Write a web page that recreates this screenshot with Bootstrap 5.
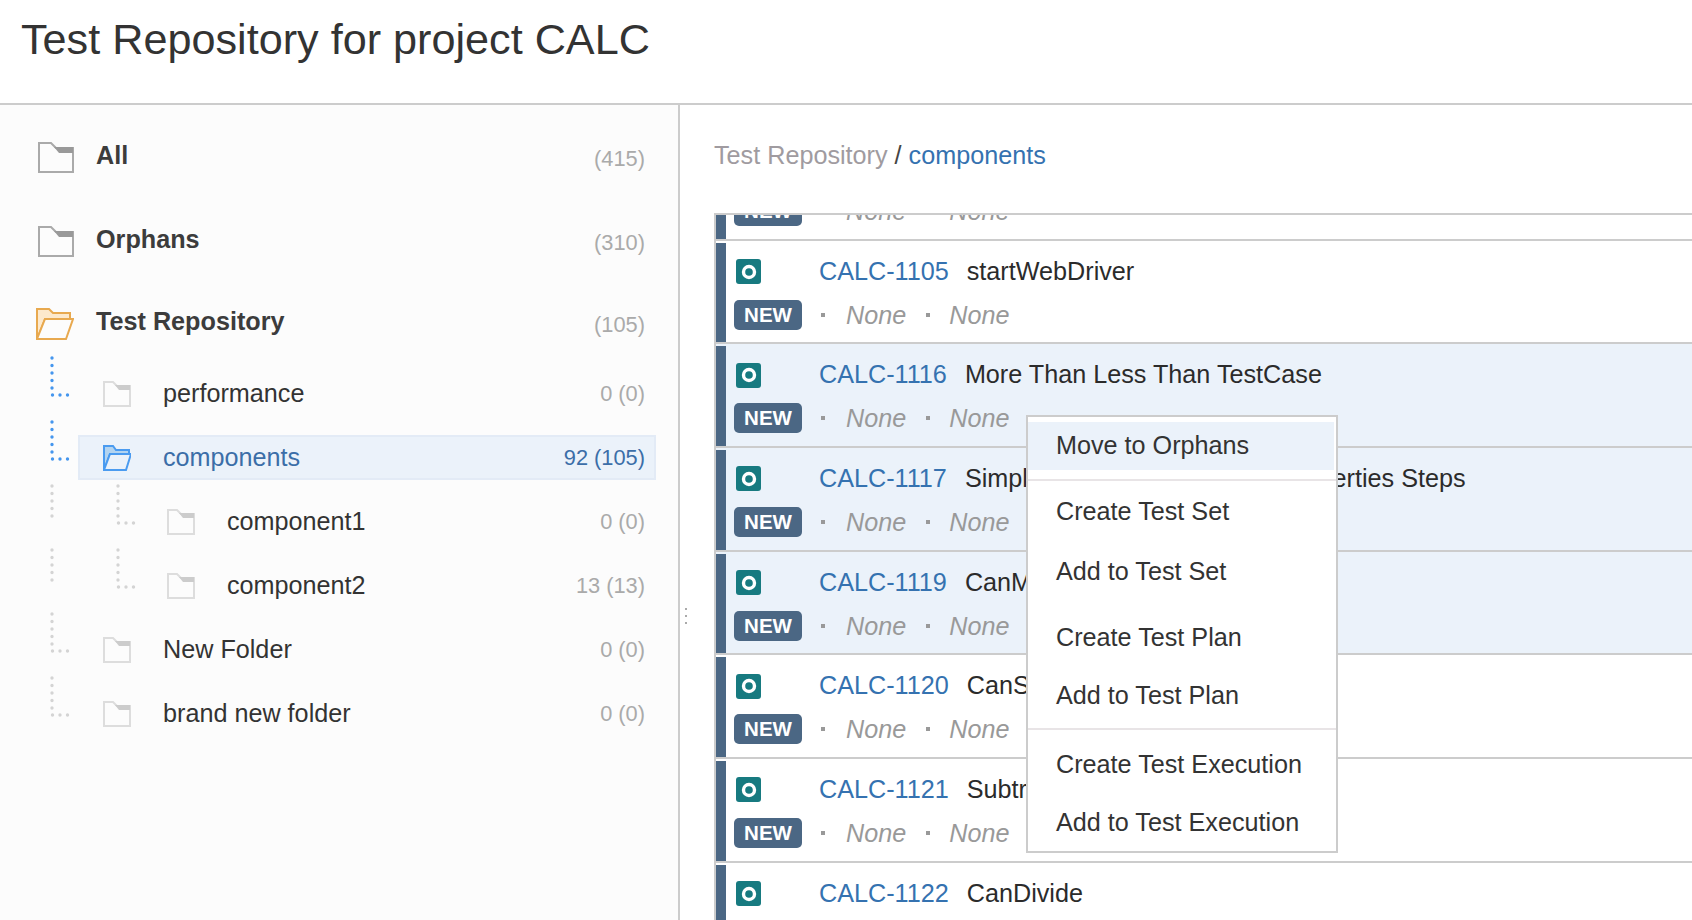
<!DOCTYPE html>
<html lang="en"><head><meta charset="utf-8"><title>Test Repository</title>
<link href="https://cdn.jsdelivr.net/npm/bootstrap@5.3.0/dist/css/bootstrap.min.css" rel="stylesheet">
<style>
html,body{height:920px;overflow:hidden}
body{font-family:"Liberation Sans",Arial,sans-serif;font-size:25.2px;color:#333;background:#fff}
.page-head{height:105px;border-bottom:2px solid #ccc;padding:13px 0 0 21px}
.page-head h1{font-size:43.2px;font-weight:400;line-height:52px;margin:0;color:#333}
.work{height:815px}
.side{width:680px;flex:none;background:#fcfcfc;border-right:2px solid #ccc;padding:29px 22px 0 38px;position:relative}
.tree-top{height:45px;padding-right:11px}
.tree-top svg{margin-top:2px}
.tree-top b{color:#3c3c3c;margin-left:22px;margin-top:-2px}
.tree-top .fold-open{margin-left:-2px}
.tree-top .fold-open+b{margin-left:22px}
.tree-row{height:45px;margin:0 0 19px 40px;padding-right:9px;border:2px solid transparent}
.tree-row.on{background:#ebf2fa;border-color:#e3ebf6;color:#3b6ea8}
.tree-top.gap-orph{margin-top:39px}.tree-top.gap-repo{margin-top:37px}.tree-row.gap-tree{margin-top:26px}
.guide{flex:none;width:1px;height:41px;overflow:visible;fill:none;stroke-width:3.4px;stroke-linecap:round;stroke-dasharray:0 7.5;stroke:#d4d4d4}
.guide.lit{stroke:#4596ee}
.lvl1{margin-left:22px}.lvl2{margin-left:86px}
.tree-row .nm{margin-left:32px}
.cnt{margin-left:auto;font-size:21.8px;color:#aaa;margin-top:2px}
.on .cnt{color:#3b6ea8}
.tree-top .top-cnt{margin-top:6px}
.grip{position:absolute;right:-9px;top:503px;width:2px;height:20px;background:repeating-linear-gradient(#aaa 0 2px,transparent 2px 7px)}
.main{flex:1;min-width:0;padding:0 0 0 34px;position:relative}
.crumbs{margin:0;height:108px;padding-top:32px;--bs-breadcrumb-margin-bottom:0;--bs-breadcrumb-item-padding-x:7px;--bs-breadcrumb-divider-color:#444}
.crumbs .breadcrumb-item:first-child{color:#a09ba0}
.crumbs a,.cid{color:#3572b0;text-decoration:none}
.crumbs .breadcrumb-item.active{color:#3572b0}
.tests{height:707px;overflow:hidden;border-top:2px solid #ccc;border-left:2px solid #ccc;border-radius:0;--bs-list-group-border-width:0}
.tests .list-group-item{height:103.67px;flex:none;padding:0;border-bottom:2px solid #ccc;border-radius:0;display:flex;color:#2b2b2b}
.tests .sel{background:#ebf2fa}
.tests .first{margin-top:-78px}
.bar{width:10px;flex:none;margin-top:2px;background:#4b6784}
.tbody{padding:16px 0 0 8px;flex:1;min-width:0}
.ln1,.ln2{white-space:nowrap}
.ln1{height:28px;line-height:28px;margin-left:3px}
.ln2{margin-top:15px;height:30px}
.tico{width:25px;height:25px;flex:none;border-radius:3px;background:#177a80;margin:2px 58px 0 -1px}
.cid{margin-right:18px}
.pill-new{background:#4b6784;color:#fff;font-weight:700;font-size:20.5px;width:68px;height:30px;border-radius:5px;padding:0;line-height:30px}
.dotm{width:4px;height:4px;background:#999;flex:none;margin:0 21px 0 19px}
.dotm.b{margin:0 19px 0 20px}
.none{font-style:italic;color:#999;line-height:30px}
.ctx{display:block;position:absolute;left:346px;top:310px;width:312px;height:438px;padding:5px 0 0;border:2px solid #ccc;border-radius:0;background:#fff;--bs-dropdown-color:#333}
.ctx .dropdown-item{padding:0 28px;height:48px;line-height:46px;color:#333;font-size:25.2px}
.ctx .dropdown-item.hot{background:#ebf2fa;width:306px;margin:0 0 9px 0}
.ctx .dropdown-divider{margin:0;border-top:2px solid #e8e4e6;opacity:1}
.ctx .i2{margin-top:7px}.ctx .i3{margin-top:12px}.ctx .i4{margin-top:18px}.ctx .i5{margin-top:10px}.ctx .i6{margin-top:11px}.ctx .i7{margin-top:10px}
.ctx .dv2{margin-top:8px}
</style></head>
<body>
<header class="page-head"><h1>Test Repository for project CALC</h1></header>
<div class="work d-flex">
<aside class="side">
 <div class="tree-top d-flex align-items-center"><svg width="36" height="31" viewBox="0 0 36 31"><path d="M1 1H13L18 6H35V30H1Z" fill="#fcfcfc" stroke="#aaa" stroke-width="2"/><path d="M16 5H35V11H21Z" fill="#999"/></svg><b>All</b><span class="cnt top-cnt">(415)</span></div>
 <div class="tree-top gap-orph d-flex align-items-center"><svg width="36" height="31" viewBox="0 0 36 31"><path d="M1 1H13L18 6H35V30H1Z" fill="#fcfcfc" stroke="#aaa" stroke-width="2"/><path d="M16 5H35V11H21Z" fill="#999"/></svg><b>Orphans</b><span class="cnt top-cnt">(310)</span></div>
 <div class="tree-top gap-repo d-flex align-items-center"><svg class="fold-open" width="38" height="32" viewBox="0 0 38 32"><path d="M1 31V1H13L17 5H34V11H9L1 31Z" fill="#fde9cc" stroke="#e8a94f" stroke-width="2"/><path d="M1 31L9 11H37L30 31Z" fill="#fcfcfc" stroke="#e8a94f" stroke-width="2"/></svg><b>Test Repository</b><span class="cnt top-cnt">(105)</span></div>
 <div class="tree-row gap-tree d-flex align-items-center"><svg class="guide lit" viewBox="0 0 1 41"><path d="M-28 -15V22H-12"/></svg><svg class="lvl1" width="28" height="26" viewBox="0 0 28 26"><path d="M1 1H10L14 5H27V25H1Z" fill="#fcfcfc" stroke="#ddd" stroke-width="2"/><path d="M12 4H27V9H16Z" fill="#ccc"/></svg><span class="nm">performance</span><span class="cnt">0 (0)</span></div>
 <div class="tree-row on d-flex align-items-center"><svg class="guide lit" viewBox="0 0 1 41"><path d="M-28 -15V22H-12"/></svg><svg class="lvl1" width="28" height="26" viewBox="0 0 28 26"><path d="M1 25V1H10L13 5H26V9H7L1 25Z" fill="#b3d4f0" stroke="#4a9bf0" stroke-width="2"/><path d="M1 25L7 9H28L23 25Z" fill="#ebf2fa" stroke="#4a9bf0" stroke-width="2"/></svg><span class="nm">components</span><span class="cnt">92 (105)</span></div>
 <div class="tree-row d-flex align-items-center"><svg class="guide" viewBox="0 0 1 41"><path d="M-28 -15V22M38 -15V22H54"/></svg><svg class="lvl2" width="28" height="26" viewBox="0 0 28 26"><path d="M1 1H10L14 5H27V25H1Z" fill="#fcfcfc" stroke="#ddd" stroke-width="2"/><path d="M12 4H27V9H16Z" fill="#ccc"/></svg><span class="nm">component1</span><span class="cnt">0 (0)</span></div>
 <div class="tree-row d-flex align-items-center"><svg class="guide" viewBox="0 0 1 41"><path d="M-28 -15V22M38 -15V22H54"/></svg><svg class="lvl2" width="28" height="26" viewBox="0 0 28 26"><path d="M1 1H10L14 5H27V25H1Z" fill="#fcfcfc" stroke="#ddd" stroke-width="2"/><path d="M12 4H27V9H16Z" fill="#ccc"/></svg><span class="nm">component2</span><span class="cnt">13 (13)</span></div>
 <div class="tree-row d-flex align-items-center"><svg class="guide" viewBox="0 0 1 41"><path d="M-28 -15V22H-12"/></svg><svg class="lvl1" width="28" height="26" viewBox="0 0 28 26"><path d="M1 1H10L14 5H27V25H1Z" fill="#fcfcfc" stroke="#ddd" stroke-width="2"/><path d="M12 4H27V9H16Z" fill="#ccc"/></svg><span class="nm">New Folder</span><span class="cnt">0 (0)</span></div>
 <div class="tree-row d-flex align-items-center"><svg class="guide" viewBox="0 0 1 41"><path d="M-28 -15V22H-12"/></svg><svg class="lvl1" width="28" height="26" viewBox="0 0 28 26"><path d="M1 1H10L14 5H27V25H1Z" fill="#fcfcfc" stroke="#ddd" stroke-width="2"/><path d="M12 4H27V9H16Z" fill="#ccc"/></svg><span class="nm">brand new folder</span><span class="cnt">0 (0)</span></div>
 <div class="grip"></div>
</aside>
<main class="main">
 <nav><ol class="breadcrumb crumbs"><li class="breadcrumb-item">Test Repository</li><li class="breadcrumb-item active"><a href="#">components</a></li></ol></nav>
 <div class="list-group tests">
  <div class="list-group-item first"><div class="bar"></div><div class="tbody"><div class="ln1 d-flex align-items-center"><span class="tico d-flex align-items-center justify-content-center"><svg width="16" height="16" viewBox="0 0 16 16"><circle cx="8" cy="8" r="5.5" fill="none" stroke="#fff" stroke-width="3.4"/></svg></span><a class="cid" href="#">CALC-1104</a><span>CanAdd</span></div><div class="ln2 d-flex align-items-center"><span class="badge pill-new">NEW</span><span class="dotm"></span><span class="none">None</span><span class="dotm b"></span><span class="none">None</span></div></div></div>
  <div class="list-group-item"><div class="bar"></div><div class="tbody"><div class="ln1 d-flex align-items-center"><span class="tico d-flex align-items-center justify-content-center"><svg width="16" height="16" viewBox="0 0 16 16"><circle cx="8" cy="8" r="5.5" fill="none" stroke="#fff" stroke-width="3.4"/></svg></span><a class="cid" href="#">CALC-1105</a><span>startWebDriver</span></div><div class="ln2 d-flex align-items-center"><span class="badge pill-new">NEW</span><span class="dotm"></span><span class="none">None</span><span class="dotm b"></span><span class="none">None</span></div></div></div>
  <div class="list-group-item sel"><div class="bar"></div><div class="tbody"><div class="ln1 d-flex align-items-center"><span class="tico d-flex align-items-center justify-content-center"><svg width="16" height="16" viewBox="0 0 16 16"><circle cx="8" cy="8" r="5.5" fill="none" stroke="#fff" stroke-width="3.4"/></svg></span><a class="cid" href="#">CALC-1116</a><span>More Than Less Than TestCase</span></div><div class="ln2 d-flex align-items-center"><span class="badge pill-new">NEW</span><span class="dotm"></span><span class="none">None</span><span class="dotm b"></span><span class="none">None</span></div></div></div>
  <div class="list-group-item sel"><div class="bar"></div><div class="tbody"><div class="ln1 d-flex align-items-center"><span class="tico d-flex align-items-center justify-content-center"><svg width="16" height="16" viewBox="0 0 16 16"><circle cx="8" cy="8" r="5.5" fill="none" stroke="#fff" stroke-width="3.4"/></svg></span><a class="cid" href="#">CALC-1117</a><span>Simple Calculator Test With Properties Steps</span></div><div class="ln2 d-flex align-items-center"><span class="badge pill-new">NEW</span><span class="dotm"></span><span class="none">None</span><span class="dotm b"></span><span class="none">None</span></div></div></div>
  <div class="list-group-item sel"><div class="bar"></div><div class="tbody"><div class="ln1 d-flex align-items-center"><span class="tico d-flex align-items-center justify-content-center"><svg width="16" height="16" viewBox="0 0 16 16"><circle cx="8" cy="8" r="5.5" fill="none" stroke="#fff" stroke-width="3.4"/></svg></span><a class="cid" href="#">CALC-1119</a><span>CanMultiply</span></div><div class="ln2 d-flex align-items-center"><span class="badge pill-new">NEW</span><span class="dotm"></span><span class="none">None</span><span class="dotm b"></span><span class="none">None</span></div></div></div>
  <div class="list-group-item"><div class="bar"></div><div class="tbody"><div class="ln1 d-flex align-items-center"><span class="tico d-flex align-items-center justify-content-center"><svg width="16" height="16" viewBox="0 0 16 16"><circle cx="8" cy="8" r="5.5" fill="none" stroke="#fff" stroke-width="3.4"/></svg></span><a class="cid" href="#">CALC-1120</a><span>CanSum</span></div><div class="ln2 d-flex align-items-center"><span class="badge pill-new">NEW</span><span class="dotm"></span><span class="none">None</span><span class="dotm b"></span><span class="none">None</span></div></div></div>
  <div class="list-group-item"><div class="bar"></div><div class="tbody"><div class="ln1 d-flex align-items-center"><span class="tico d-flex align-items-center justify-content-center"><svg width="16" height="16" viewBox="0 0 16 16"><circle cx="8" cy="8" r="5.5" fill="none" stroke="#fff" stroke-width="3.4"/></svg></span><a class="cid" href="#">CALC-1121</a><span>Subtract</span></div><div class="ln2 d-flex align-items-center"><span class="badge pill-new">NEW</span><span class="dotm"></span><span class="none">None</span><span class="dotm b"></span><span class="none">None</span></div></div></div>
  <div class="list-group-item"><div class="bar"></div><div class="tbody"><div class="ln1 d-flex align-items-center"><span class="tico d-flex align-items-center justify-content-center"><svg width="16" height="16" viewBox="0 0 16 16"><circle cx="8" cy="8" r="5.5" fill="none" stroke="#fff" stroke-width="3.4"/></svg></span><a class="cid" href="#">CALC-1122</a><span>CanDivide</span></div><div class="ln2 d-flex align-items-center"><span class="badge pill-new">NEW</span><span class="dotm"></span><span class="none">None</span><span class="dotm b"></span><span class="none">None</span></div></div></div>
 </div>
 <ul class="dropdown-menu ctx">
  <li><a class="dropdown-item hot" href="#">Move to Orphans</a></li>
  <li><hr class="dropdown-divider"></li>
  <li><a class="dropdown-item i2" href="#">Create Test Set</a></li>
  <li><a class="dropdown-item i3" href="#">Add to Test Set</a></li>
  <li><a class="dropdown-item i4" href="#">Create Test Plan</a></li>
  <li><a class="dropdown-item i5" href="#">Add to Test Plan</a></li>
  <li><hr class="dropdown-divider dv2"></li>
  <li><a class="dropdown-item i6" href="#">Create Test Execution</a></li>
  <li><a class="dropdown-item i7" href="#">Add to Test Execution</a></li>
 </ul>
</main>
</div>
<script src="https://cdn.jsdelivr.net/npm/bootstrap@5.3.0/dist/js/bootstrap.bundle.min.js"></script>
</body></html>
